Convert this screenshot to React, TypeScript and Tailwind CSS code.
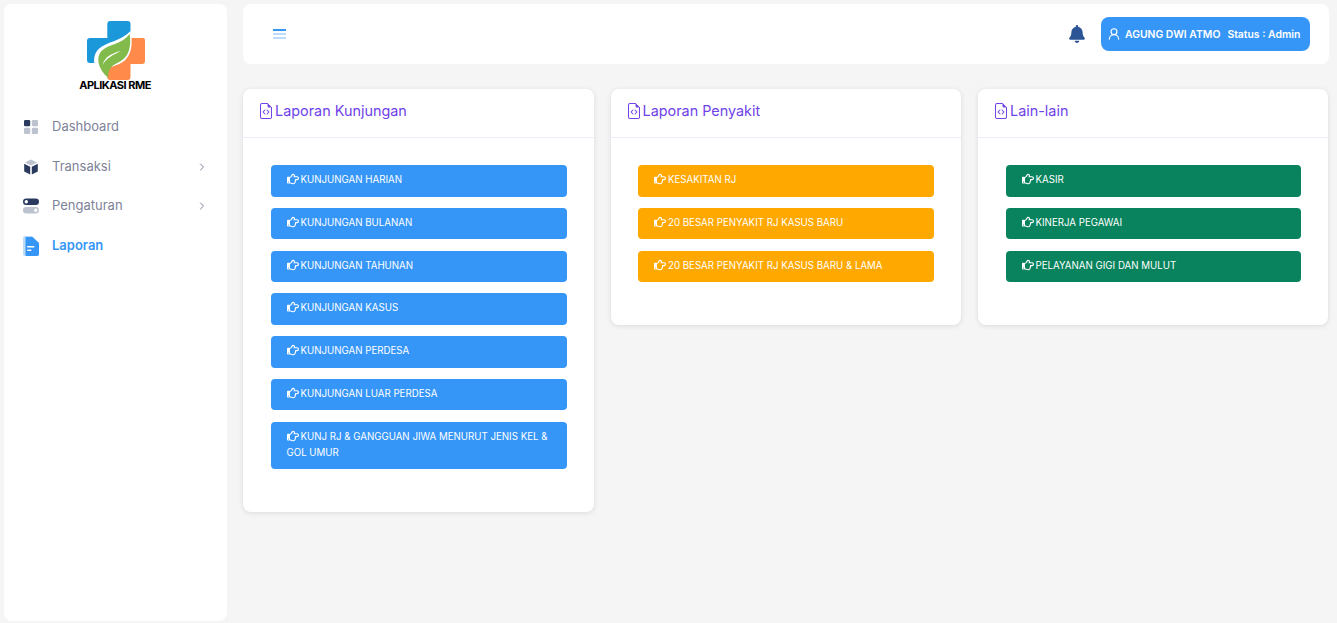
import React from 'react';
import { FaRegHandPointRight, FaBell } from 'react-icons/fa';
import { BsFileEarmarkCode } from 'react-icons/bs';
import { UserRound, ChevronRight } from 'lucide-react';

const font = "font-['Inter','Noto_Sans',sans-serif]";

const Logo = () => (
    <svg width="58" height="60" viewBox="0 0 60 60" preserveAspectRatio="none" className="block">
        <path d="M21 3a3 3 0 0 1 3-3h18a3 3 0 0 1 3 3v17H21z" fill="#1b98d9" />
        <path d="M3 17h20v25H3a3 3 0 0 1-3-3V20a3 3 0 0 1 3-3z" fill="#1b98d9" />
        <path d="M20 17h25v25H20z" fill="#1b98d9" />
        <path d="M45 17h13a2 2 0 0 1 2 2v21a3 3 0 0 1-3 3H45v13a3 3 0 0 1-3 3H24a3 3 0 0 1-3-3V42z" fill="#ff8a4a" />
        <path d="M20 59C6 50 4 36 12 28c7-7 24-8 33-18 0 0 6 22-8 31-6 4-14 4-17 9z" fill="#fff" />
        <path d="M22 57C11 48 9 36 15 30c7-7 22-7 29-17 2 11 0 22-9 27-7 4-13 5-13 17z" fill="#82bb4c" />
        <path d="M16 44c2-8 10-12 19-14-8 4-15 7-19 14z" fill="#fff" />
    </svg>
);

const DashboardIcon = () => (
    <svg width="16" height="16" viewBox="0 0 16 16">
        <rect x="1" y="1" width="6.2" height="6.2" rx="1.2" fill="#2a3a5e" />
        <rect x="8.8" y="1" width="6.2" height="6.2" rx="1.2" fill="#bcc3ce" />
        <rect x="1" y="8.8" width="6.2" height="6.2" rx="1.2" fill="#bcc3ce" />
        <rect x="8.8" y="8.8" width="6.2" height="6.2" rx="1.2" fill="#bcc3ce" />
    </svg>
);

const BoxIcon = () => (
    <svg width="16" height="16" viewBox="0 0 16 16">
        <path d="M8 .5l6 3-6 3-6-3z" fill="#bcc3ce" />
        <path d="M1.2 4.8l6 3v7.7l-6-3z" fill="#2a3a5e" />
        <path d="M14.8 4.8l-6 3v7.7l6-3z" fill="#2a3a5e" />
    </svg>
);

const ToggleIcon = () => (
    <svg width="16" height="16" viewBox="0 0 16 16">
        <rect x="0" y="0.5" width="16" height="6.5" rx="3.25" fill="#2a3a5e" />
        <circle cx="3.3" cy="3.75" r="1.7" fill="#fff" />
        <rect x="0" y="9" width="16" height="6.5" rx="3.25" fill="#bcc3ce" />
        <circle cx="12.7" cy="12.25" r="1.7" fill="#fff" />
    </svg>
);

const ReportIcon = () => (
    <svg width="16" height="20" viewBox="0 0 16 20">
        <path d="M2 0h7l7 7v11a2 2 0 0 1-2 2H2a2 2 0 0 1-2-2V2a2 2 0 0 1 2-2z" fill="#bcdcfb" />
        <path d="M4 1h5.500l6.500 6v11a2 2 0 0 1-2 2H3.500a2 2 0 0 1-1-.5V2a1 1 0 0 1 1.500-1z" fill="#3696f8" />
        <rect x="4" y="10" width="7.500" height="1.500" rx=".7" fill="#fff" />
        <rect x="4" y="13.500" width="4.500" height="1.500" rx=".7" fill="#fff" />
    </svg>
);

type NavRow = { label: string; icon: React.ReactNode; arrow?: boolean; active?: boolean };

const nav: NavRow[] = [
    { label: 'Dashboard', icon: <DashboardIcon /> },
    { label: 'Transaksi', icon: <BoxIcon />, arrow: true },
    { label: 'Pengaturan', icon: <ToggleIcon />, arrow: true },
    { label: 'Laporan', icon: <ReportIcon />, active: true },
];

const ReportCard = ({ title, color, items }: { title: string; color: string; items: string[] }) => (
    <div className="self-start rounded-lg bg-white shadow-[0_1px_5px_rgba(30,30,80,0.12)]">
        <div className="flex h-[49px] items-center gap-[1px] border-b border-[#eeeefb] pb-[4px] pl-[15px] text-[14.400px] text-[#6f42e8]">
            <BsFileEarmarkCode className="h-[16px] w-[16px]" />
            <span>{title}</span>
        </div>
        <div className="flex flex-col gap-[11.250px] pt-[27px] pr-[27px] pb-[43px] pl-[27.500px]">
            {items.map(item => (
                <div key={item} className={`rounded-[4px] pt-[7px] pr-[14px] pb-[8.500px] pl-[16px] text-[9.700px] leading-[16px] text-white ${color}`}>
                    <FaRegHandPointRight className="mr-[2px] inline h-[12px] w-[12px] align-[-2px]" />
                    {item}
                </div>
            ))}
        </div>
    </div>
);

export default function App() {
    return (
        <div className={`flex h-[623px] gap-[16px] overflow-hidden bg-[#f5f5f5] pt-[4px] pr-[8px] pb-[2px] pl-[4px] ${font}`}>
            <aside className="w-[223px] shrink-0 rounded-lg bg-white">
                <div className="flex flex-col items-center pt-[17px]">
                    <Logo />
                    <div className="mt-[-3px] ml-[-1px] text-[11px] leading-[14px] font-bold tracking-[-0.5px] text-black">APLIKASI RME</div>
                </div>
                <nav className="mt-[21px] flex flex-col gap-[11.500px] pr-[19px] pl-[19px]">
                    {nav.map(row => (
                        <div key={row.label} className="flex h-[28px] items-center">
                            <div className="flex w-[29px] shrink-0 items-center">{row.icon}</div>
                            <span className={`flex-1 text-[13px] ${row.active ? 'font-semibold text-[#3696f8]' : 'text-[#7e8299]'}`}>{row.label}</span>
                            {row.arrow && <ChevronRight className="h-[12px] w-[12px] text-[#7e8299]" />}
                        </div>
                    ))}
                </nav>
            </aside>
            <main className="flex min-w-0 flex-1 flex-col gap-[25px]">
                <header className="flex h-[60px] items-center rounded-lg bg-white pr-[19px] pl-[30px]">
                    <div className="flex w-[13px] flex-col gap-[2px]">
                        <span className="h-[2px] bg-[#3696f8]" />
                        <span className="h-[2px] bg-[#bcdcfb]" />
                        <span className="h-[2px] bg-[#bcdcfb]" />
                    </div>
                    <FaBell className="mr-[15px] ml-auto h-[18px] w-[18px] text-[#2c5596]" />
                    <div className="flex h-[34px] w-[209px] items-center gap-[7px] rounded-lg bg-[#3696f8] pt-[2px] pl-[6px] text-[10.400px] font-semibold text-white">
                        <span className="flex items-center gap-[4px]">
                            <UserRound className="mt-[-2px] h-[14px] w-[14px]" />
                            AGUNG DWI ATMO
                        </span>
                        <span>Status : Admin</span>
                    </div>
                </header>
                <div className="grid grid-cols-[350.500px_350.500px_350px] gap-x-[17px]">
                    <ReportCard
                        title="Laporan Kunjungan"
                        color="bg-[#3696f8]"
                        items={[
                            'KUNJUNGAN HARIAN',
                            'KUNJUNGAN BULANAN',
                            'KUNJUNGAN TAHUNAN',
                            'KUNJUNGAN KASUS',
                            'KUNJUNGAN PERDESA',
                            'KUNJUNGAN LUAR PERDESA',
                            'KUNJ RJ & GANGGUAN JIWA MENURUT JENIS KEL & GOL UMUR',
                        ]}
                    />
                    <ReportCard
                        title="Laporan Penyakit"
                        color="bg-[#ffa800]"
                        items={['KESAKITAN RJ', '20 BESAR PENYAKIT RJ KASUS BARU', '20 BESAR PENYAKIT RJ KASUS BARU & LAMA']}
                    />
                    <ReportCard
                        title="Lain-lain"
                        color="bg-[#08835d]"
                        items={['KASIR', 'KINERJA PEGAWAI', 'PELAYANAN GIGI DAN MULUT']}
                    />
                </div>
            </main>
        </div>
    );
}
